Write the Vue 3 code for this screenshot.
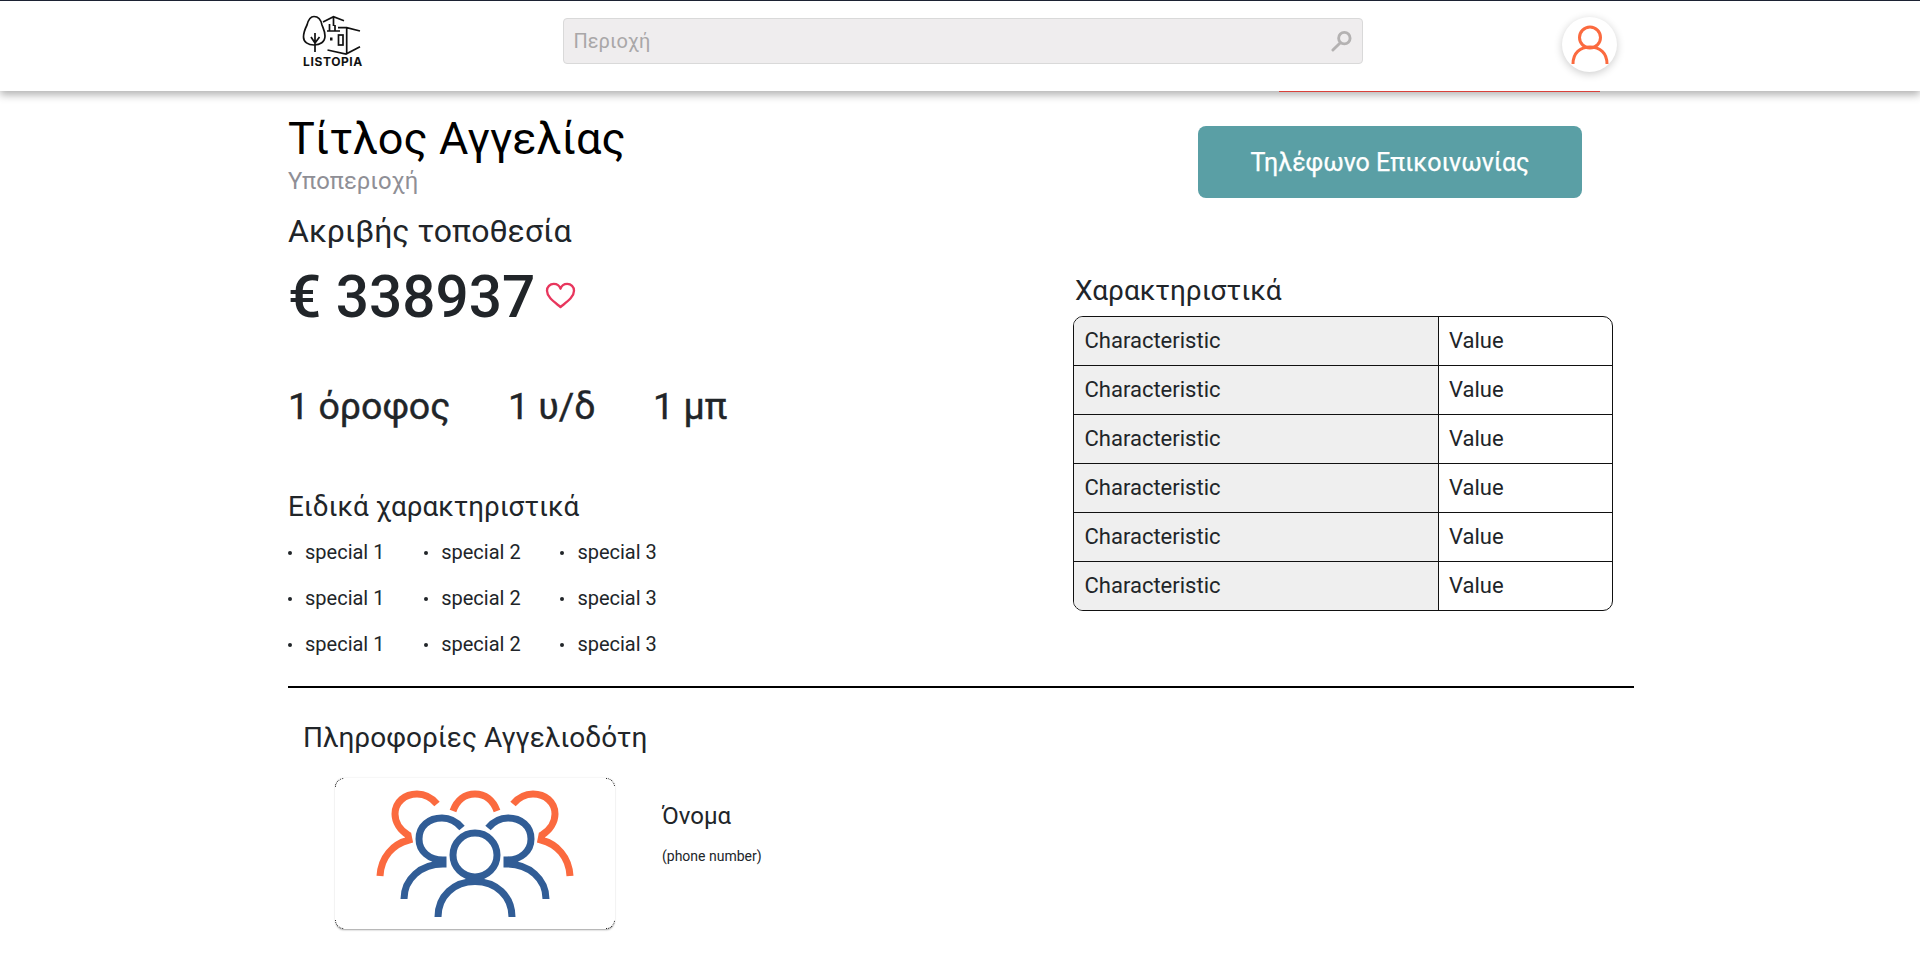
<template>
  <div class="page">
    <header class="topbar">
      <div class="topbar-inner">
        <div class="logo">
          <svg class="logo-mark" viewBox="0 0 60 40" width="60" height="40" fill="none" stroke="#111" stroke-width="1.700">
            <path d="M11 1.500 C7 1.500 5 6 4 10 C2 14 0.500 18 0.500 22 C0.500 27 5 30 11 30 C17 30 22 27 22 21 C22 16 20 13 19 10 C18 5 15 1.500 11 1.500 Z" />
            <path d="M12 37 V18 M12 28 L8 22 M12 28 L16.500 22" />
            <path d="M20 7 L30.500 1.700 L41 5.700 M30.500 1.700 V11 M26.500 9 V16 M32 10 V16 M24 16 H37" />
            <path d="M35 12.700 H43.700 L57 16 M43.700 12.700 V38.500 M24.500 35 L43 39 L57 31.700" />
            <rect x="35.500" y="20" width="4.500" height="10" />
            <rect x="27" y="22.500" width="2.500" height="3" fill="#111" stroke="none" />
          </svg>
          <span class="logo-text">LISTOPIA</span>
        </div>
        <div class="search">
          <span class="search-text">Περιοχή</span>
          <svg viewBox="0 0 22 22" width="21" height="21" fill="none" stroke="#b4b2b2" stroke-width="3">
            <circle cx="14" cy="7.500" r="6" />
            <path d="M9.500 12.500 L2 20" stroke-linecap="round" />
          </svg>
        </div>
        <div class="avatar">
          <svg viewBox="0 0 38 40" width="38" height="40" fill="none" stroke="#fb6a3f" stroke-width="3">
            <circle cx="19" cy="12.500" r="10.500" />
            <path d="M2 39 C2 28 9 22 19 22 C29 22 36 28 36 39" />
          </svg>
        </div>
      </div>
      <div class="red-line"></div>
    </header>

    <main class="content">
      <section class="columns">
        <div class="left">
          <h1 class="title">Τίτλος Αγγελίας</h1>
          <div class="subarea">Υποπεριοχή</div>
          <div class="location">Ακριβής τοποθεσία</div>
          <div class="price-row">
            <span class="price">€ 338937</span>
            <svg class="heart" viewBox="0 0 32 28" width="31" height="27" fill="none" stroke="#e8365d" stroke-width="2.400">
              <path d="M16 26 C10 21 2 16 2 9 C2 5 5 2 9 2 C12 2 15 4 16 7 C17 4 20 2 23 2 C27 2 30 5 30 9 C30 16 22 21 16 26 Z" stroke-linejoin="round" />
            </svg>
          </div>
          <div class="facts">
            <span>1 όροφος</span>
            <span>1 υ/δ</span>
            <span>1 μπ</span>
          </div>
          <h2 class="special-title">Ειδικά χαρακτηριστικά</h2>
          <ul class="specials">
            <li v-for="(item, i) in specials" :key="i">{{ item }}</li>
          </ul>
        </div>
        <div class="right">
          <button class="phone-btn">Τηλέφωνο Επικοινωνίας</button>
          <h2 class="char-title">Χαρακτηριστικά</h2>
          <div class="char-table">
            <div v-for="n in 6" :key="n" class="char-row">
              <div class="char-key">Characteristic</div>
              <div class="char-val">Value</div>
            </div>
          </div>
        </div>
      </section>
      <hr class="divider" />
      <section class="advertiser">
        <h2 class="adv-title">Πληροφορίες Αγγελιοδότη</h2>
        <div class="adv-body">
          <div class="adv-card">
            <svg viewBox="0 0 200 130" width="200" height="130" fill="none" stroke-width="7">
              <g stroke="#fb6a3f">
                <path d="M5 87 C6 68 18 55 34 51 L33 46 C25 41 20 33 20 25 C20 13 30 5 42 5 C50 5 57 9 62 15" />
                <path d="M78 22 C82 11 90 5 100 5 C110 5 118 11 122 22" />
                <path d="M195 87 C194 68 182 55 166 51 L167 46 C175 41 180 33 180 25 C180 13 170 5 158 5 C150 5 143 9 138 15" />
              </g>
              <g stroke="#315d96">
                <path d="M29 110 C29 90 46 75 68 75 L68 71 C54 71 44 62 44 50 C44 37 54 29 67 29 C75 29 82 33 87 39" />
                <path d="M171 110 C171 90 154 75 132 75 L132 71 C146 71 156 62 156 50 C156 37 146 29 133 29 C125 29 118 33 113 39" />
                <circle cx="100" cy="66" r="22" />
                <path d="M63 128 C63 107 79 92.500 100 92.500 C121 92.500 137 107 137 128" />
              </g>
            </svg>
          </div>
          <div class="adv-info">
            <div class="adv-name">Όνομα</div>
            <div class="adv-phone">(phone number)</div>
          </div>
        </div>
      </section>
    </main>
  </div>
</template>

<script setup>
const specials = Array.from({ length: 9 }, (_, i) => `special ${(i % 3) + 1}`)
</script>

<style>
body { background: #fff; }
</style>

<style scoped>
.page {
  font-family: Roboto, "Liberation Sans", sans-serif;
  color: #212529;
  height: 962px;
  overflow: hidden;
  background: #fff;
}
.topbar {
  position: relative;
  height: 91px;
  box-sizing: border-box;
  border-top: 1px solid #1c2233;
  background: #fff;
  box-shadow: 0 4px 8px rgba(0, 0, 0, 0.3);
}
.topbar-inner {
  display: flex;
  align-items: flex-start;
  padding-left: 302px;
}
.logo {
  width: 62px;
  display: flex;
  flex-direction: column;
  align-items: center;
  padding-top: 14px;
}
.logo-mark { display: block; overflow: visible; }
.logo-text {
  font-family: Inter, "Liberation Sans", sans-serif;
  font-weight: 700;
  font-size: 12px;
  line-height: 12px;
  letter-spacing: 0.6px;
  color: #111;
  margin-top: 1px;
  white-space: nowrap;
}
.search {
  margin: 17px 0 0 199px;
  width: 800px;
  height: 46px;
  box-sizing: border-box;
  display: flex;
  align-items: center;
  justify-content: space-between;
  padding: 0 10px 0 9.500px;
  background: #efedee;
  border: 1px solid #d9d9d9;
  border-radius: 4px;
}
.search-text {
  font-size: 20px;
  color: #a9a7a8;
}
.avatar {
  margin: 16px 0 0 199px;
  width: 55px;
  height: 55px;
  border-radius: 50%;
  background: #fff;
  box-shadow: 0 2px 8px rgba(0, 0, 0, 0.2);
  display: flex;
  align-items: center;
  justify-content: center;
}
.red-line {
  position: absolute;
  left: 1279px;
  top: 90px;
  width: 321px;
  height: 1px;
  background: #d9413a;
}
.content {
  padding: 0 286px 0 288px;
}
.columns {
  display: flex;
  height: 595px;
}
.left {
  width: 785px;
}
.title {
  margin: 23px 0 0;
  font-size: 45px;
  line-height: 50px;
  font-weight: 400;
  color: #000;
}
.subarea {
  margin-top: 3px;
  font-size: 23.800px;
  line-height: 28px;
  color: #8f8f96;
}
.location {
  margin-top: 18px;
  font-size: 32px;
  line-height: 36px;
}
.price-row {
  margin-top: 16px;
  display: flex;
  align-items: center;
  gap: 10px;
}
.price {
  font-size: 58.500px;
  line-height: 64px;
  font-weight: 500;
}
.heart {
  margin-bottom: 4px;
}
.facts {
  margin-top: 55px;
  display: flex;
  gap: 57.500px;
  font-size: 37.500px;
  line-height: 44px;
  font-weight: 400;
  -webkit-text-stroke: 0.4px #212529;
}
.special-title {
  margin: 62px 0 0;
  font-size: 27.800px;
  line-height: 34px;
  font-weight: 400;
}
.specials {
  list-style: none;
  margin: 5px 0 0;
  padding: 0;
  display: grid;
  grid-template-columns: repeat(3, 136.200px);
  width: 420px;
  grid-auto-rows: 46px;
}
.specials li {
  font-size: 20px;
  line-height: 46px;
  padding-left: 17px;
  position: relative;
}
.specials li::before {
  content: "";
  position: absolute;
  left: 0;
  top: 22px;
  width: 4px;
  height: 4px;
  border-radius: 50%;
  background: #212529;
}
.right {
  position: relative;
  flex: 1;
}
.phone-btn {
  display: block;
  margin: 35px 0 0 125px;
  width: 384px;
  height: 72px;
  border: none;
  border-radius: 8px;
  background: #5a9fa5;
  color: #fff;
  font-family: inherit;
  font-size: 25px;
  font-weight: 400;
  -webkit-text-stroke: 0.25px #fff;
}
.char-title {
  margin: 76px 0 0 2px;
  font-size: 28px;
  line-height: 34px;
  font-weight: 400;
}
.char-table {
  margin-top: 8px;
  width: 540px;
  box-sizing: border-box;
  border: 1px solid #111;
  border-radius: 10px;
  overflow: hidden;
}
.char-row {
  display: flex;
  height: 49px;
  box-sizing: border-box;
  border-bottom: 1px solid #111;
  font-size: 22px;
}
.char-row:last-child { border-bottom: none; height: 48px; }
.char-key {
  width: 365px;
  box-sizing: border-box;
  padding-left: 10.500px;
  background: #efefef;
  border-right: 1px solid #111;
  line-height: 47px;
}
.char-val {
  padding-left: 10px;
  line-height: 47px;
}
.divider {
  margin: 0;
  border: none;
  border-top: 2px solid #000;
}
.advertiser {
  padding: 32px 0 0 15px;
}
.adv-title {
  margin: 0;
  font-size: 28px;
  line-height: 36px;
  font-weight: 400;
}
.adv-body {
  display: flex;
  margin: 22px 0 0 32px;
}
.adv-card {
  position: relative;
  width: 280px;
  height: 151px;
  box-sizing: border-box;
  display: flex;
  align-items: center;
  justify-content: center;
  background: #fff;
  border: 1px dotted #000;
  border-radius: 9px;
  box-shadow: 0 2px 2px -1px rgba(0, 0, 0, 0.35), 0 0 2px rgba(0, 0, 0, 0.12);
}
.adv-card::before,
.adv-card::after {
  content: "";
  position: absolute;
  box-sizing: border-box;
}
.adv-card::before {
  inset: -1px 8px;
  border-top: 1px solid #fff;
  border-bottom: 1px solid #fff;
}
.adv-card::after {
  inset: 8px -1px;
  border-left: 1px solid #fff;
  border-right: 1px solid #fff;
}
.adv-info {
  margin-left: 47px;
}
.adv-name {
  margin-top: 23px;
  font-size: 24px;
  line-height: 30px;
}
.adv-phone {
  margin-top: 15px;
  font-size: 14px;
  line-height: 20px;
}
</style>
